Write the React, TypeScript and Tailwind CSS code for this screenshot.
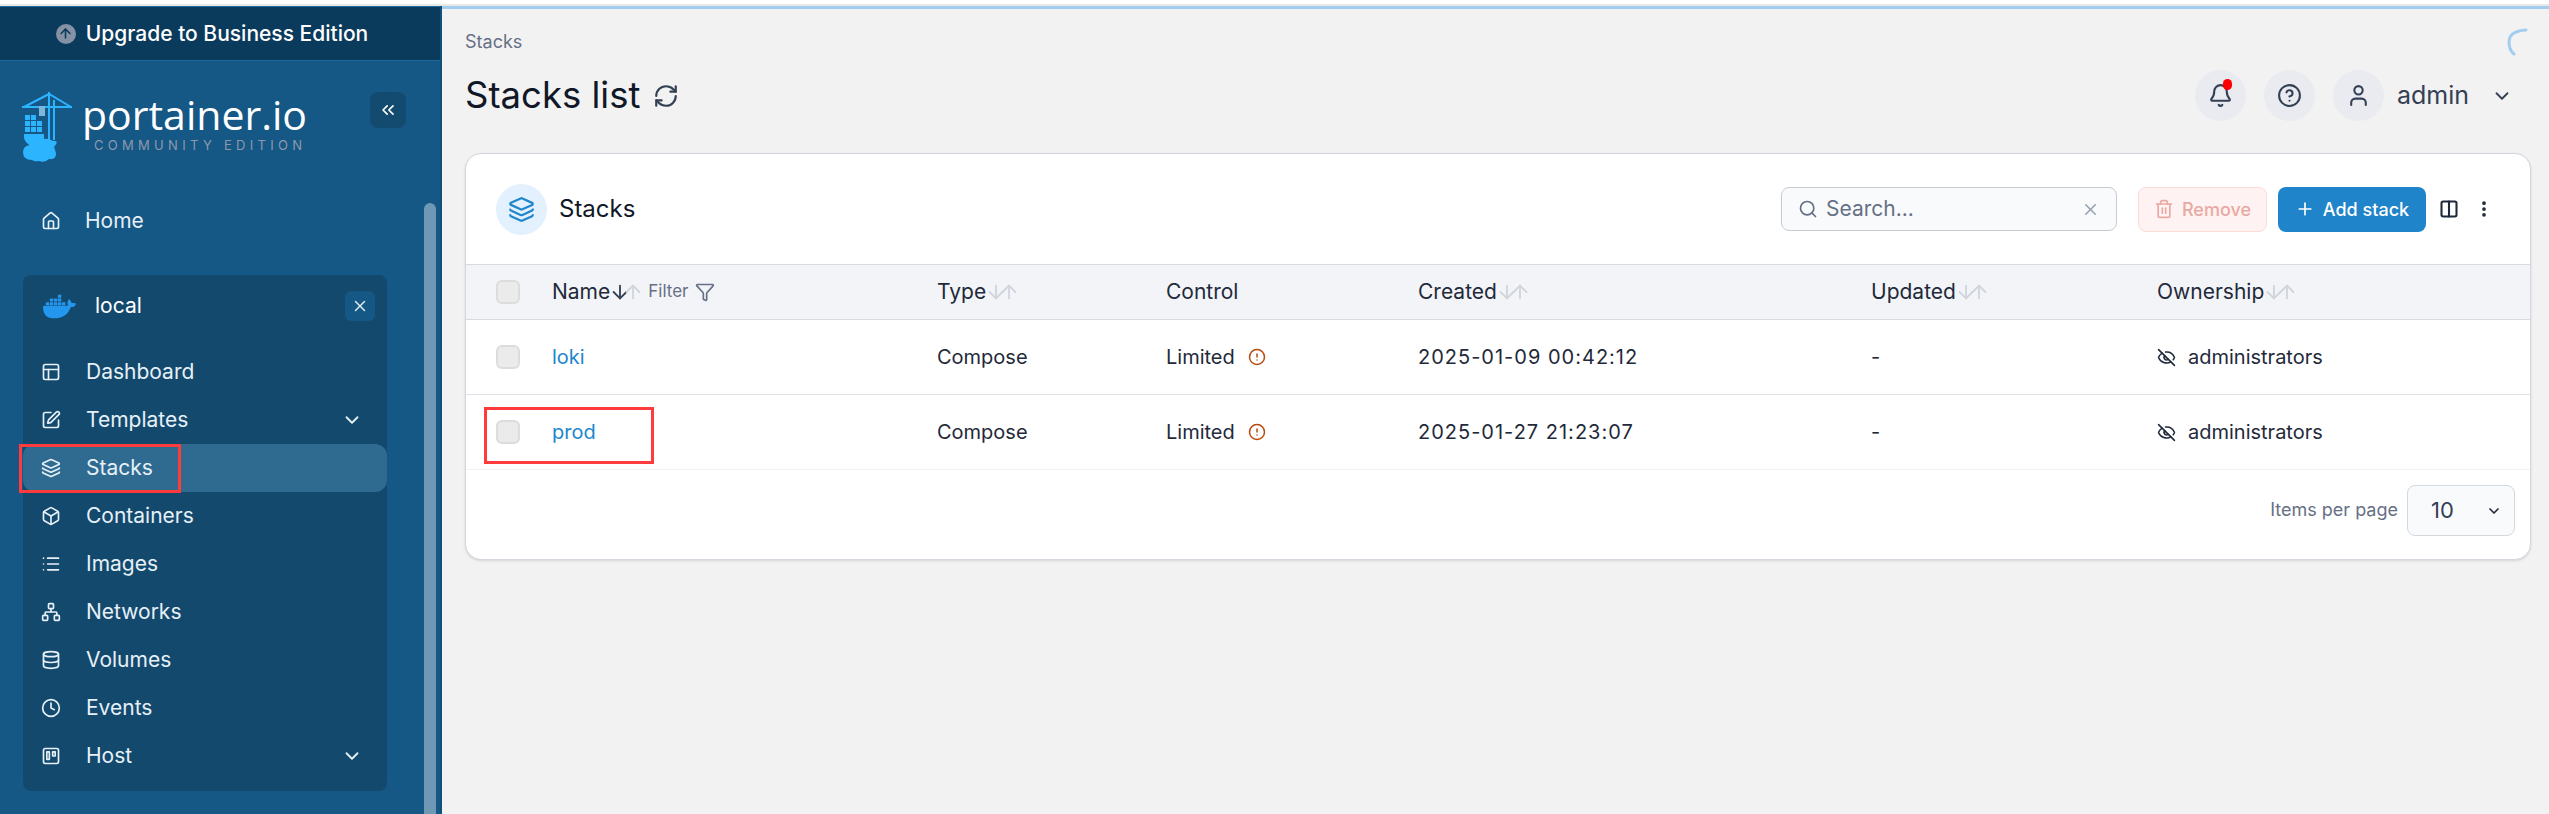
import React from "react";
import {
  Home, PanelsTopLeft, SquarePen, Layers, Box, List, Network, Database, Clock, Trello, ChevronDown, ChevronsLeft, X,
  ArrowUp, ArrowDown, RefreshCw, Bell, CircleHelp, User, Search, Trash2, Plus, Columns2, EllipsisVertical, Filter, CircleAlert, EyeOff,
} from "lucide-react";
import { SiDocker } from "react-icons/si";

const NAV = [
  { label: "Dashboard", Icon: PanelsTopLeft },
  { label: "Templates", Icon: SquarePen, chevron: true },
  { label: "Stacks", Icon: Layers, active: true },
  { label: "Containers", Icon: Box },
  { label: "Images", Icon: List },
  { label: "Networks", Icon: Network },
  { label: "Volumes", Icon: Database },
  { label: "Events", Icon: Clock },
  { label: "Host", Icon: Trello, chevron: true },
];

const ROWS = [
  { name: "loki", created: "2025-01-09 00:42:12" },
  { name: "prod", created: "2025-01-27 21:23:07" },
];

function Logo() {
  return (
    <svg width="52" height="70" viewBox="0 0 52 70" className="shrink-0">
      <g stroke="#2db4ff" strokeWidth="2" fill="none">
        <path d="M2 15 L27 2 L49 15 M0 15 H50" />
        <path d="M27 0 V48 M32 8 V48" />
      </g>
      <rect x="17" y="14" width="6" height="10" fill="#7fb6dc" />
      <g fill="#2db4ff">
        <rect x="3" y="23" width="5" height="5" />
        <rect x="9" y="23" width="5" height="5" />
        <rect x="3" y="29" width="5" height="5" />
        <rect x="9" y="29" width="5" height="5" />
        <rect x="15" y="29" width="5" height="5" />
        <rect x="3" y="35" width="5" height="5" />
        <rect x="9" y="35" width="5" height="5" />
        <rect x="15" y="35" width="5" height="5" />
        <path d="M2 42 H22 V50 Q12 58 6 52 Q1 48 2 42 Z" />
        <path d="M10 68 Q1 68 1 60 Q1 54 8 53 Q12 44 21 47 Q27 46 31 49 Q38 48 32 55 Q34 60 34 62 Q34 68 27 67 Q23 71 17 69 Q13 70 10 68 Z" />
      </g>
    </svg>
  );
}

function SortArrows({ active }: { active?: boolean }) {
  return (
    <span className="flex items-center -ml-px">
      <ArrowDown size={22} strokeWidth={2} className={active ? "text-[#344054] -mr-[9px]" : "text-[#d0d5dd] -mr-[9px]"} />
      <ArrowUp size={22} strokeWidth={2} className="text-[#d0d5dd]" />
    </span>
  );
}

function Sidebar() {
  return (
    <aside className="relative w-[442px] shrink-0 bg-[#155785] flex flex-col h-[808px] overflow-hidden border-r-2 border-[#12507b]">
      <div className="h-[55px] shrink-0 bg-[#0a3a5c] border-y border-[#1d6aa0] flex items-center justify-center gap-2.5 pr-4 text-white text-[21px] font-medium">
        <span className="w-5 h-5 rounded-full bg-[#8592a6] flex items-center justify-center">
          <ArrowUp size={15} strokeWidth={2.5} className="text-[#0a3a5c]" />
        </span>
        Upgrade to Business Edition
      </div>
      <div className="flex items-start pl-[22px] pt-[31px] h-[136px] shrink-0">
        <Logo />
        <div className="ml-2 w-[230px] flex flex-col">
          <span className="text-white text-[41px] leading-[44px] font-medium h-[46px] whitespace-nowrap [font-family:'Open_Sans',sans-serif]">portainer.io</span>
          <span className="text-[#8d99ab] text-[13px] leading-[14px] tracking-[4.3px] ml-3 whitespace-nowrap">COMMUNITY EDITION</span>
        </div>
        <button className="ml-[58px] w-9 h-9 rounded-lg bg-[#134a70] flex items-center justify-center text-white">
          <ChevronsLeft size={20} strokeWidth={2} />
        </button>
      </div>
      <div className="flex items-center h-12 pl-[41px] shrink-0 text-[#e6f0f7] text-[21px]">
        <Home size={20} strokeWidth={2} />
        <span className="ml-[24px]">Home</span>
      </div>
      <div className="ml-[23px] mt-[30px] w-[364px] h-[516px] shrink-0 bg-[#14496e] rounded-lg flex flex-col">
        <div className="flex items-center h-[62px] pl-5 pr-3 mb-[11px]">
          <SiDocker size={33} color="#2396ed" />
          <span className="ml-[19px] text-white text-[21px]">local</span>
          <span className="ml-auto w-[30px] h-[30px] rounded-md bg-[#155785] flex items-center justify-center text-[#dce8f0]">
            <X size={18} strokeWidth={2} />
          </span>
        </div>
        <div>
          {NAV.map(({ label, Icon, chevron, active }) => (
            <div key={label} className={`flex items-center h-12 pl-[18px] pr-6 text-[21px] text-[#e6f0f7] rounded-xl ${active ? "bg-[#2f6b91]" : ""}`}>
              <Icon size={20} strokeWidth={2} />
              <span className="ml-[25px]">{label}</span>
              {chevron && <ChevronDown size={22} strokeWidth={2} className="ml-auto" />}
            </div>
          ))}
        </div>
      </div>
      <span className="absolute left-[424px] top-[197px] w-3 h-[640px] rounded-full bg-[#6f98b5]" />
      <span className="absolute left-[19px] top-[438px] w-[162px] h-[49px] border-[3px] border-[#ff3b3b]" />
    </aside>
  );
}

function Head({ label, sortable = true, active, filter }: { label: string; sortable?: boolean; active?: boolean; filter?: boolean }) {
  return (
    <div className="flex items-center text-[21px] text-[#1f2a3a]">
      {label}
      {sortable && <SortArrows active={active} />}
      {filter && (
        <span className="flex items-center ml-1 text-[#667085] text-[17px]">
          Filter
          <Filter size={20} strokeWidth={2} className="ml-[6px]" />
        </span>
      )}
    </div>
  );
}

const GRID = "grid grid-cols-[56px_385px_229px_252px_453px_286px_1fr] items-center pl-[30px]";

function Card() {
  return (
    <section className="relative w-[2066px] h-[407px] bg-white rounded-2xl border border-[#d3d7de] shadow-sm flex flex-col overflow-hidden">
      <div className="h-[110px] shrink-0 flex items-center pl-[30px] pr-[38px]">
        <span className="w-[51px] h-[51px] rounded-full bg-[#e2f1fd] flex items-center justify-center text-[#2187cb]">
          <Layers size={27} strokeWidth={2} />
        </span>
        <span className="ml-[12px] text-[24px] text-[#101828]">Stacks</span>
        <div className="ml-auto w-[336px] h-[44px] rounded-lg bg-[#f9fafc] border border-[#c6cad1] flex items-center px-4 text-[#667085]">
          <Search size={20} strokeWidth={2} />
          <span className="ml-[8px] text-[21px]">Search...</span>
          <X size={19} strokeWidth={2} className="ml-auto text-[#98a2b3]" />
        </div>
        <button className="ml-[21px] w-[129px] h-[45px] rounded-lg bg-[#fef3f2] border border-[#fcdcd9] text-[#e9a9a3] text-[18px] font-medium flex items-center justify-center gap-[8px]">
          <Trash2 size={20} strokeWidth={2} />
          Remove
        </button>
        <button className="ml-[11px] w-[148px] h-[45px] rounded-lg bg-[#1f84c9] text-white text-[18px] font-medium flex items-center justify-center gap-[8px]">
          <Plus size={20} strokeWidth={2} />
          Add stack
        </button>
        <Columns2 size={20} strokeWidth={2.5} className="ml-[13px] text-[#1d2939]" />
        <EllipsisVertical size={20} strokeWidth={2.5} className="ml-[15px] mr-[-2px] text-[#1d2939]" />
      </div>
      <div className={`${GRID} h-[56px] shrink-0 bg-[#f2f4f8] border-y border-[#d7dbe1]`}>
        <span className="w-6 h-6 rounded-md bg-[#ebebeb] border-2 border-[#dcdcdc]" />
        <Head label="Name" active filter />
        <Head label="Type" />
        <Head label="Control" sortable={false} />
        <Head label="Created" />
        <Head label="Updated" />
        <Head label="Ownership" />
      </div>
      {ROWS.map((r, i) => (
        <div key={r.name} className={`${GRID} h-[75px] shrink-0 border-b text-[20px] text-[#1f2a3a] ${i === 0 ? "border-[#dfe2e7]" : "border-[#f1f2f4]"}`}>
          <span className="w-6 h-6 rounded-md bg-[#ebebeb] border-2 border-[#dcdcdc]" />
          <a className="text-[#2187cb]">{r.name}</a>
          <span>Compose</span>
          <span className="flex items-center">
            Limited
            <CircleAlert size={18} strokeWidth={2} className="ml-[13px] text-[#b84a0d]" />
          </span>
          <span className="tracking-[1px]">{r.created}</span>
          <span>-</span>
          <span className="flex items-center whitespace-nowrap">
            <EyeOff size={19} strokeWidth={2} className="mr-[12px]" />
            administrators
          </span>
        </div>
      ))}
      <div className="flex items-center justify-end pt-[15px] pr-[15px]">
        <span className="text-[18px] text-[#667085] mr-[9px] -mt-[3px]">Items per page</span>
        <div className="w-[108px] h-[51px] rounded-lg bg-[#f9fafc] border border-[#d3d7de] flex items-center pl-[23px] pr-[12px] text-[22px] text-[#344054]">
          10
          <ChevronDown size={16} strokeWidth={2.5} className="ml-auto text-[#1d2939]" />
        </div>
      </div>
      <span className="absolute left-[18px] top-[253px] w-[170px] h-[57px] border-[3px] border-[#ff3b3b]" />
    </section>
  );
}

function IconCircle({ children, className }: { children: React.ReactNode; className?: string }) {
  return <span className={`relative w-[51px] h-[51px] rounded-full bg-[#e9ebf0] flex items-center justify-center text-[#344054] ${className ?? ""}`}>{children}</span>;
}

function Main() {
  return (
    <main className="relative flex-1 min-w-0 h-[808px] bg-[#f2f2f2] border-t-[3px] border-[#a3cdee] flex flex-col pl-[23px]">
      <div className="text-[18px] leading-[20px] text-[#667085] pt-[23px]">Stacks</div>
      <div className="flex items-center mt-[18px] h-[51px]">
        <h1 className="text-[36.5px] font-normal text-[#101828]">Stacks list</h1>
        <RefreshCw size={26} strokeWidth={2} className="ml-[13px] text-[#344054]" />
        <div className="ml-auto flex items-center pr-[36px]">
          <IconCircle>
            <Bell size={25} strokeWidth={2} />
            <span className="absolute top-[9px] right-[14px] w-[9px] h-[11px] rounded-full bg-[#ff0000]" />
          </IconCircle>
          <IconCircle className="ml-[18px]"><CircleHelp size={25} strokeWidth={2} /></IconCircle>
          <IconCircle className="ml-[18px]"><User size={25} strokeWidth={2} /></IconCircle>
          <span className="ml-[13px] text-[25px] text-[#344054]">admin</span>
          <ChevronDown size={22} strokeWidth={2} className="ml-[22px] text-[#344054]" />
        </div>
      </div>
      <div className="mt-[32px]"><Card /></div>
      <svg width="24" height="28" viewBox="0 0 24 28" className="absolute right-[20px] top-[19px]">
        <path d="M21 2 Q4 3 4 14 Q4 22 9 26" fill="none" stroke="#a3cdee" strokeWidth="3" strokeLinecap="round" />
      </svg>
    </main>
  );
}

export default function App() {
  return (
    <div className="w-[2549px] h-[814px] overflow-hidden bg-white [font-family:Inter,'Liberation_Sans',sans-serif]">
      <div className="h-[4px] bg-white" />
      <div className="h-[2px] bg-[#e8e8e8]" />
      <div className="flex">
        <Sidebar />
        <Main />
      </div>
    </div>
  );
}
